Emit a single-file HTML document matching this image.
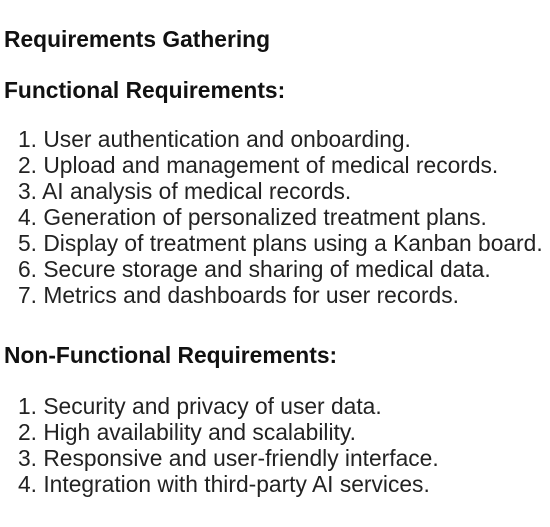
<!DOCTYPE html>
<html><head><meta charset="utf-8"><style>
body{margin:0;width:550px;height:527px;background:#fff;font-family:"Liberation Sans",Arial,sans-serif;position:relative;overflow:hidden}
.h{position:absolute;left:4px;font-weight:bold;font-size:22.8px;line-height:26px;color:#111;margin:0;white-space:nowrap}
.l{position:absolute;left:18px;font-size:22.8px;line-height:26px;color:#222;white-space:nowrap}
</style></head><body>
<div class="h" style="top:26px">Requirements Gathering</div>
<div class="h" style="top:77px">Functional Requirements:</div>
<div class="l" style="top:126px">1. User authentication and onboarding.<br>2. Upload and management of medical records.<br>3. AI analysis of medical records.<br>4. Generation of personalized treatment plans.<br>5. Display of treatment plans using a Kanban board.<br>6. Secure storage and sharing of medical data.<br>7. Metrics and dashboards for user records.</div>
<div class="h" style="top:342px">Non-Functional Requirements:</div>
<div class="l" style="top:393px">1. Security and privacy of user data.<br>2. High availability and scalability.<br>3. Responsive and user-friendly interface.<br>4. Integration with third-party AI services.</div>
</body></html>
